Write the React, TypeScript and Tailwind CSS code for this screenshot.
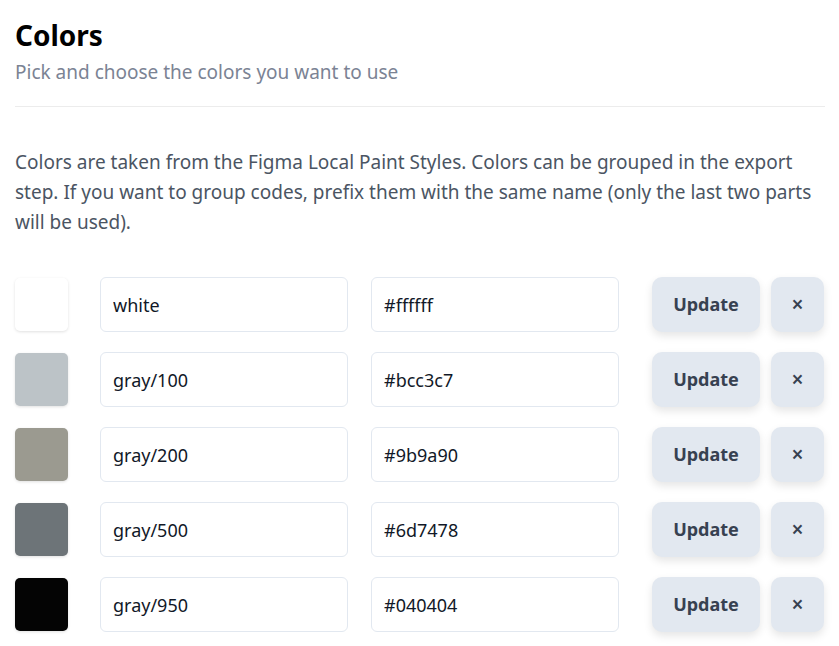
import { useState } from 'react';

const initial = [
  { name: 'white', hex: '#ffffff' },
  { name: 'gray/100', hex: '#bcc3c7' },
  { name: 'gray/200', hex: '#9b9a90' },
  { name: 'gray/500', hex: '#6d7478' },
  { name: 'gray/950', hex: '#040404' },
];

function ColorRow({ name, hex }: { name: string; hex: string }) {
  const [n, setN] = useState(name);
  const [h, setH] = useState(hex);
  return (
    <div className="flex items-center h-[55px]">
      {/* swatch */}
      <div
        className="w-[53px] h-[53px] rounded-[5px] shadow-[0_1px_3px_rgba(0,0,0,0.12)] shrink-0"
        style={{ backgroundColor: hex }}
      />
      <input
        value={n}
        onChange={(e) => setN(e.target.value)}
        className="ml-[32px] w-[248px] h-[55px] border border-[#e2e8f0] rounded-[6px] px-[12px] text-[18px] text-[#111827] outline-none"
      />
      <input
        value={h}
        onChange={(e) => setH(e.target.value)}
        className="ml-[23px] w-[248px] h-[55px] border border-[#e2e8f0] rounded-[6px] px-[12px] text-[18px] text-[#111827] outline-none"
      />
      <button className="ml-[33px] w-[108px] h-[55px] rounded-[10px] bg-[#e2e8f0] text-[18px] font-bold text-[#374151] shadow-[0_4px_8px_rgba(0,0,0,0.1)]">
        Update
      </button>
      <button className="ml-[11px] w-[53px] h-[55px] rounded-[10px] bg-[#e2e8f0] text-[21px] font-semibold text-[#374151] shadow-[0_4px_8px_rgba(0,0,0,0.1)]">
        ×
      </button>
    </div>
  );
}

export default function App() {
  return (
    <div className="bg-white min-h-screen px-[15px] pt-[17px] font-['Noto_Sans',sans-serif]">
      <h1 className="text-[28px] leading-[36px] font-bold text-black">Colors</h1>
      <p className="text-[19px] leading-[28px] text-[#7b8394] mt-[5px]">
        Pick and choose the colors you want to use
      </p>
      <div className="h-px bg-[#ececec] mt-[20px] w-[810px]" />

      <p className="mt-[40px] text-[19px] leading-[30px] text-[#4b5563] w-[800px]">
        Colors are taken from the Figma Local Paint Styles. Colors can be grouped in the export
        step. If you want to group codes, prefix them with the same name (only the last two parts
        will be used).
      </p>

      <div className="mt-[40px] flex flex-col gap-[20px]">
        {initial.map((c) => (
          <ColorRow key={c.name} name={c.name} hex={c.hex} />
        ))}
      </div>
    </div>
  );
}
